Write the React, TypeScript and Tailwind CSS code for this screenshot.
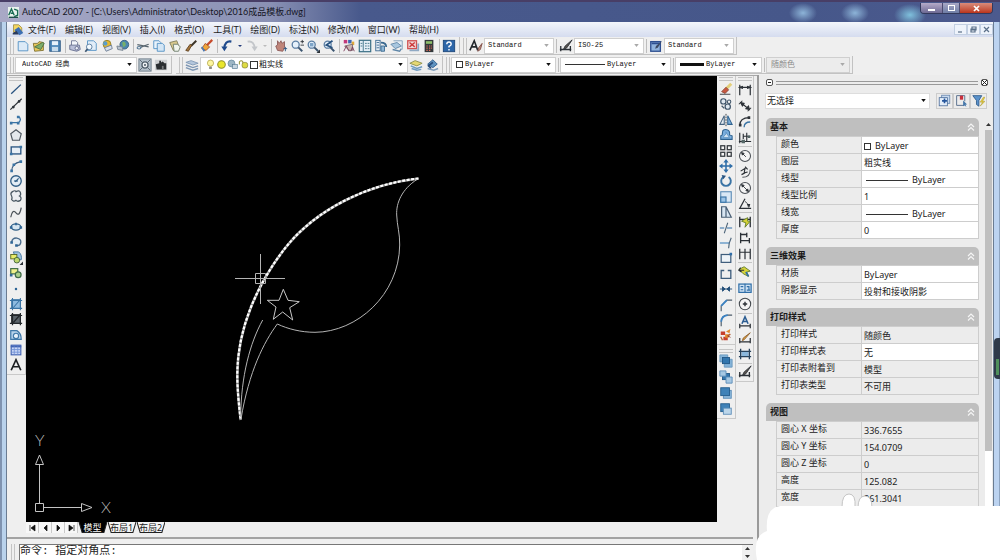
import React from 'react';

type Shape = React.ReactNode;

const NAVY = '#27527f';
const BLUE = '#4f8fc4';
const INK = '#2b3036';

const page = <path d="M2.500 3h8l3 3v7.500h-11z" fill="#dceaf7" stroke={BLUE} />;
const lens = (
  <>
    <circle cx="6.500" cy="6.500" r="4" fill="#e6f1fb" stroke="#5b7ea3" strokeWidth="1.500" />
    <path d="M9.500 9.500l4.500 4.500" stroke="#3c5570" strokeWidth="2.200" />
  </>
);

const ICONS: Record<string, Shape> = {
  new: page,
  open: (
    <>
      <path d="M1.500 5h5l1.500-2 5 1v9l-10 1z" fill="#e9c75a" stroke="#7d7032" />
      <path d="M3 9l9-5 2 1-4 7z" fill="#7fae6b" stroke="#4b6f45" />
    </>
  ),
  save: (
    <>
      <rect x="2" y="2" width="12" height="12" fill="#4c86b8" stroke={NAVY} />
      <rect x="4.500" y="2.500" width="7" height="4.500" fill="#e7f1fa" />
      <rect x="4.500" y="9" width="7" height="5" fill="#c6dbec" />
    </>
  ),
  plot: (
    <>
      <path d="M4 7V2h5l2 2v3" fill="#f3f6fb" stroke="#6b7391" />
      <path d="M2 7h11l1 5-4 2-8-2z" fill="#b9bfd8" stroke="#646c8d" />
      <circle cx="10" cy="10.500" r="2" fill="#e9ecf5" stroke="#646c8d" />
    </>
  ),
  preview: (
    <>
      <path d="M4 2h7l3 3v8H4z" fill="#e1edf8" stroke={BLUE} />
      <circle cx="6" cy="9" r="3.200" fill="#f4fafe" stroke="#52779c" />
      <path d="M4 11.500L1.500 14.500" stroke="#3c5570" strokeWidth="2" />
    </>
  ),
  publish: (
    <>
      <circle cx="8" cy="6" r="4.500" fill="#e7b92e" stroke="#8f7a26" />
      <circle cx="6" cy="5" r="2.500" fill="#5a9ecb" />
      <path d="M5 10l8-3 1 4-7 3z" fill="#d8dfea" stroke="#687a91" />
    </>
  ),
  dwf: (
    <>
      <circle cx="9.500" cy="6.500" r="5" fill="#4b87ae" stroke="#355f7c" />
      <path d="M7 4q3-2 4 1t-3 4z" fill="#76b06a" />
      <path d="M1 8l6 1 1 4-6-1z" fill="#b8c3cf" stroke="#77838f" />
    </>
  ),
  cut: (
    <>
      <path d="M1.500 6.500l13 2.500M14.500 6L5 9.500" stroke="#59666f" strokeWidth="1.500" fill="none" />
      <ellipse cx="3.500" cy="10" rx="2.200" ry="1.400" fill="none" stroke="#567995" strokeWidth="1.200" />
    </>
  ),
  copy: (
    <>
      <path d="M2 2h6l2 2v7H2z" fill="#e9f3fb" stroke={BLUE} />
      <path d="M6 5h6l2 2v7H6z" fill="#d4e6f5" stroke={BLUE} />
    </>
  ),
  paste: (
    <>
      <path d="M2 4l8-2 3 8-7 3z" fill="#d9c98e" stroke="#7b7a58" />
      <path d="M6 6l5 0 3 3-2 5H7z" fill="#f1f5ee" stroke="#6d7c6a" />
    </>
  ),
  match: (
    <>
      <path d="M14 2L8 8" stroke="#3b3327" strokeWidth="2.200" />
      <path d="M9 7l-2-1-5 7 3 1z" fill="#a5763c" stroke="#5d4020" />
    </>
  ),
  block: (
    <>
      <path d="M14 1L7 8" stroke="#c74a2a" strokeWidth="2.500" />
      <path d="M6 5l5 4-4 4-5-2z" fill="#eea63a" stroke="#a4502a" />
      <path d="M2 9l3 5" stroke="#4b79b3" strokeWidth="2" />
    </>
  ),
  undo: (
    <>
      <path d="M13 3C8 2 5 5 5 11" fill="none" stroke="#1f4a8c" strokeWidth="2.500" />
      <path d="M1.500 8.500h7L5 14z" fill="#1f4a8c" />
    </>
  ),
  redo: (
    <>
      <path d="M3 3c5-1 8 2 8 8" fill="none" stroke="#c3c6ca" strokeWidth="2.200" />
      <path d="M7.500 8.500h7L11 14z" fill="#c3c6ca" />
    </>
  ),
  pan: (
    <>
      <path d="M4 13l-2-5 2-1V2l2 3 2-3 1 3 3-2v7l-2 4z" fill="#c08579" stroke="#8b5a58" />
      <path d="M11 11h4M13 9v5" stroke={NAVY} />
    </>
  ),
  zoomRt: (
    <>
      {lens}
      <path d="M12 3h4M14 1v4M12 7h4" stroke={INK} />
    </>
  ),
  zoomWin: (
    <>
      {lens}
      <rect x="4.500" y="4.500" width="4" height="4" fill="#7ea5c8" />
      <path d="M16 12v4h-4z" fill={INK} />
    </>
  ),
  zoomPrev: (
    <>
      {lens}
      <path d="M12 2L5 7l7 3" fill="none" stroke={NAVY} strokeWidth="2" />
    </>
  ),
  props: (
    <>
      <path d="M2 1h4v4H2z" fill="#c2397a" />
      <path d="M7 1h4v4H7z" fill="#3c67b5" />
      <path d="M11 3h3v4h-3z" fill="#e0a93a" />
      <path d="M3 8l9-2v7H8z" fill="#c9b7b0" stroke="#7d6a70" />
      <path d="M2 14l3-6 3 6M10 14l2-5 2 5" stroke="#7b3a59" fill="none" />
    </>
  ),
  center: (
    <>
      <rect x="1.500" y="1.500" width="13" height="13" fill="#e4eef6" stroke="#3d7186" strokeWidth="1.400" />
      <path d="M6 2v12M8 5h2M11 5h2M8 8h2M11 8h2M8 11h2M11 11h2M3 5h2M3 8h2" stroke="#3d7186" />
    </>
  ),
  palettes: (
    <>
      <rect x="2" y="1.500" width="5" height="12" fill="#e6edf5" stroke="#3a6990" />
      <path d="M3 4h3M3 7h3M3 10h3" stroke="#3a6990" />
      <path d="M8 4q6 0 6 5" fill="none" stroke="#3a6990" strokeWidth="2" />
      <path d="M8 8h4v6H8z" fill="#8fb6d6" stroke="#3a6990" />
    </>
  ),
  sheets: (
    <>
      <path d="M4 2h10v10" fill="#e4edf5" stroke="#7f9db8" />
      <path d="M1 6l7-2 5 4-7 3z" fill="#a9c7df" stroke="#5f86a8" />
      <path d="M3 12l8 2 2-3" fill="none" stroke="#5f86a8" strokeWidth="1.500" />
    </>
  ),
  markup: (
    <>
      <rect x="2" y="2" width="10" height="9" fill="#f2d9d9" stroke="#d05252" strokeWidth="1.500" />
      <path d="M4 4l6 5M10 4L4 9" stroke="#cc3838" strokeWidth="1.500" />
      <path d="M4 13h10V5" fill="none" stroke="#8fa9c4" strokeWidth="2" />
    </>
  ),
  calc: (
    <>
      <rect x="3" y="1" width="10" height="14" fill="#33383b" />
      <rect x="4.500" y="2.500" width="7" height="3" fill="#8fbf6b" />
      <path d="M5 8h1.500M8 8h1.500M10.500 8h1M5 10.500h1.500M8 10.500h1.500M5 13h1.500M8 13h1.500M10.500 10.500h1" stroke="#df6d5c" strokeWidth="1.400" />
    </>
  ),
  help: (
    <>
      <rect x="1.500" y="1.500" width="13" height="13" fill="#2d66a8" stroke="#1d4679" />
      <path d="M5.500 6q0-2.500 2.500-2.500T10.500 6q0 1.300-2.500 2.500v1.300M8 11.300v1.700" fill="none" stroke="#fff" strokeWidth="1.600" />
    </>
  ),
  textStyle: (
    <>
      <path d="M1 13L6 2l4 11M3 9h6" fill="none" stroke="#23282d" strokeWidth="1.800" />
      <path d="M15 5l-4 5-1 4 3-2z" fill="#b98e80" stroke="#7d4a44" />
    </>
  ),
  dimStyle: (
    <>
      <path d="M2 8v6M1 12h13M13 8v6" stroke="#2b3036" strokeWidth="1.500" fill="none" />
      <path d="M15 1L7 8l-2 4 4-2z" fill="#59544f" stroke="#2b3036" />
    </>
  ),
  tableStyle: (
    <>
      <rect x="2" y="3" width="11" height="11" fill="#8fb2dc" stroke="#2e4f90" strokeWidth="1.500" />
      <path d="M3 5h9" stroke="#2e4f90" strokeWidth="2" />
      <path d="M15 2l-7 6-1 3 3-1z" fill="#3d4a63" />
    </>
  ),
  gear: (
    <>
      <rect x="1" y="1" width="14" height="14" fill="#b3c0ca" stroke="#6d7c88" />
      <circle cx="8" cy="8" r="3.500" fill="#eef2f4" stroke="#52606c" strokeWidth="1.500" />
      <circle cx="8" cy="8" r="1.200" fill="#52606c" />
      <path d="M2 2l3 3M14 2l-3 3M2 14l3-3M14 14l-3-3" stroke="#52606c" />
    </>
  ),
  house: (
    <>
      <path d="M1 2h14v12H1z" fill="#cfd1d3" />
      <path d="M2 7l4-1V3h2v2l2-1 2 2h2v7H3z" fill="#2b2e31" />
      <path d="M9 9h2v4H9z" fill="#77797b" />
    </>
  ),
  layers: (
    <>
      <path d="M1 5l6-2 8 3-6 2z" fill="#b3c6dc" stroke="#7e97b4" />
      <path d="M1 8l8 3 6-2M1 11l8 3 6-2" stroke="#7e97b4" strokeWidth="1.600" fill="none" />
    </>
  ),
  layerSet: (
    <>
      <path d="M1 6l6-3 8 3-6 3z" fill="#e5d873" stroke="#8d8f4c" />
      <path d="M2 9l7 3 6-2M3 12l6 2 5-1" stroke="#6e9bc1" strokeWidth="1.600" fill="none" />
    </>
  ),
  layerPrev: (
    <>
      <path d="M3 7l6-5 5 5-5 4z" fill="#5f93c0" stroke="#2f5d8b" />
      <path d="M9 5L4 9l3 3" fill="none" stroke="#274a78" strokeWidth="2" />
      <path d="M3 12l7 2 5-2" stroke="#7f9dba" strokeWidth="1.600" fill="none" />
    </>
  ),
  bulb: (
    <>
      <circle cx="8" cy="6" r="4.500" fill="#fdf6a0" stroke="#a99a3c" />
      <path d="M6 11h4v3.500H6z" fill="#8b8b83" />
    </>
  ),
  sun: <circle cx="8" cy="8" r="5.500" fill="#e9e62c" stroke="#8f8f2e" strokeWidth="1.500" />,
  vpFreeze: (
    <>
      <circle cx="6.500" cy="6.500" r="5" fill="#9db6c4" stroke="#5d8197" />
      <rect x="8" y="8" width="7" height="6" fill="#c8d6df" stroke="#5d8197" />
    </>
  ),
  unlock: (
    <>
      <path d="M2 8V4q3-3 5 0v2" fill="none" stroke="#96953c" strokeWidth="1.500" />
      <rect x="6" y="5" width="8" height="8" rx="3" fill="#dedb42" stroke="#7f7e2c" />
    </>
  ),
  line: <path d="M2.500 13.500L13.500 3" stroke={NAVY} strokeWidth="1.500" />,
  xline: (
    <>
      <path d="M1.500 14.500L14.500 2" stroke={INK} strokeWidth="1.300" />
      <circle cx="5" cy="11.500" r="1.500" fill={INK} />
      <circle cx="11.500" cy="5" r="1.500" fill={INK} />
    </>
  ),
  pline: (
    <>
      <path d="M2 11h9q4-3.500 0-7" fill="none" stroke="#3a74a5" strokeWidth="1.500" />
      <path d="M1 10h3v3H1zM9 3h3v3H9zM9 10h3v3H9z" fill="#3a74a5" />
    </>
  ),
  polygon: <path d="M8 2l6 4.500L12 14H4L2 6.500z" fill="#e4e8ec" stroke="#4d565f" strokeWidth="1.300" />,
  rect: (
    <>
      <rect x="2.500" y="4.500" width="11" height="8" fill="#e7eef5" stroke={NAVY} strokeWidth="1.500" />
      <path d="M1 11h3v3H1zM12 3h3v3h-3z" fill="#3a74a5" />
    </>
  ),
  arc: (
    <>
      <path d="M3 14Q3 5 13.500 3" fill="none" stroke="#3a5d80" strokeWidth="1.400" />
      <path d="M1.500 12h3v3h-3zM4 5h3v3H4zM12 1.500h3v3h-3z" fill="#3a74a5" />
    </>
  ),
  circle: (
    <>
      <circle cx="8" cy="8" r="6" fill="#e3edf5" stroke="#2f5d85" strokeWidth="1.500" />
      <path d="M7 9l4-4M6 8h4" stroke="#2f5d85" strokeWidth="1.500" />
    </>
  ),
  cloud: (
    <path d="M3 8q-2-3 1-5 3-2 4 0 4-2 5 1 1 3-1 4 3 2 1 5-3 2-5 0-3 2-5-1 1-2 0-4z" fill="#eceef1" stroke="#485661" strokeWidth="1.400" />
  ),
  spline: <path d="M2 14q2-10 6-5t6-6" fill="none" stroke="#4b5258" strokeWidth="1.400" />,
  ellipse: (
    <>
      <ellipse cx="8" cy="8" rx="5.500" ry="3.500" fill="#d6e5f0" stroke="#2f5d85" strokeWidth="1.400" />
      <path d="M1 7h3v3H1zM12 7h3v3h-3zM7 3h2v3H7z" fill="#2f6697" />
    </>
  ),
  ellArc: (
    <>
      <path d="M3 8q1-5 6-4.500 5 1 4.500 5T9 12" fill="#e4edf4" stroke="#496a8a" strokeWidth="1.500" />
      <path d="M1.500 7h3v3h-3zM7 10.500h3v3H7z" fill="#2f6697" />
    </>
  ),
  insert: (
    <>
      <path d="M5 1h6q4 3 3 9H8z" fill="#9fc3e2" stroke="#3c6f9c" />
      <rect x="2" y="4" width="7" height="5" fill="#e8ec6a" stroke="#55631f" />
      <circle cx="9" cy="10.500" r="3.200" fill="#bdd86c" stroke="#3e5f38" />
      <path d="M16 12v4h-4z" fill={INK} />
    </>
  ),
  makeBlock: (
    <>
      <rect x="2" y="3" width="8" height="6" fill="#eef08a" stroke="#44704a" strokeWidth="1.400" />
      <circle cx="10.500" cy="10" r="3.300" fill="#a9d08c" stroke="#3e6a48" strokeWidth="1.400" />
      <path d="M1 9h3v3H1z" fill="#2f6697" />
    </>
  ),
  point: <circle cx="8" cy="8" r="1.400" fill="#2f6697" />,
  hatch: (
    <>
      <rect x="3" y="3" width="10" height="10" fill="#8ebbe0" stroke="#3a74a5" />
      <path d="M1 4h14M1 13h14M4 1v14M13 1v14M5 12l7-8" stroke="#3a74a5" strokeWidth="1.200" />
    </>
  ),
  gradient: (
    <>
      <rect x="3" y="3" width="10" height="10" fill="#5c646b" stroke="#1f2326" />
      <path d="M1 4h14M1 13h14M4 1v14M13 1v14M5 12l7-8" stroke="#23272b" strokeWidth="1.400" />
    </>
  ),
  region: (
    <>
      <path d="M2 3h7q5 3 5 10H2z" fill="#b5d2ea" stroke="#3f78a8" strokeWidth="1.400" />
      <circle cx="8" cy="9" r="3" fill="#e8f2fa" stroke="#3f78a8" strokeWidth="1.300" />
    </>
  ),
  table: (
    <>
      <rect x="2.500" y="2.500" width="11" height="11" fill="#c9d6f6" stroke="#4264b4" strokeWidth="1.300" />
      <path d="M2 4h12" stroke="#4264b4" strokeWidth="2" />
      <path d="M3 7.500h10M3 10.500h10M6 4v9M10 4v9" stroke="#7392d6" />
    </>
  ),
  mtext: <path d="M2.500 14L8 2l5.500 12M4.500 10h7" fill="none" stroke="#1d2023" strokeWidth="1.900" />,
  erase: (
    <>
      <path d="M14 2L8 8" stroke="#e3cf7a" strokeWidth="3.500" />
      <path d="M8 6l3 3-4 4-4-2z" fill="#c9573f" stroke="#8b4b3e" />
      <path d="M1 14h12" stroke={INK} />
    </>
  ),
  copyObj: (
    <>
      <circle cx="5" cy="5" r="3" fill="#dfe8f0" stroke="#3f5469" strokeWidth="1.400" />
      <circle cx="11.500" cy="5.500" r="2" fill="none" stroke="#3f5469" strokeWidth="1.200" />
      <circle cx="10" cy="11" r="3" fill="#dfe8f0" stroke="#3f5469" strokeWidth="1.400" />
      <path d="M3 10l3 3" stroke="#3f5469" strokeWidth="1.400" />
    </>
  ),
  mirror: (
    <>
      <path d="M6 3v10H1z" fill="#e6edf3" stroke="#44617e" strokeWidth="1.200" />
      <path d="M10 3v10h5z" fill="#7fb0da" stroke="#2e628f" strokeWidth="1.200" />
      <path d="M8 1v14" stroke={INK} strokeDasharray="2 1" />
    </>
  ),
  offset: (
    <>
      <path d="M2 13V9q2 0 2-4t5-3q4 1 3 6l3 1v4z" fill="#7aaede" stroke="#2e628f" strokeWidth="1.200" />
      <path d="M5 11q0-2 2-3t1-3 2 3l2 3z" fill="#d3e4f3" stroke="#5d92c0" />
    </>
  ),
  array: (
    <>
      <rect x="2" y="2" width="4.500" height="4.500" fill="#f5f5f5" stroke="#3a3f44" strokeWidth="1.500" />
      <rect x="9.500" y="2" width="4.500" height="4.500" fill="#f5f5f5" stroke="#3a3f44" strokeWidth="1.500" />
      <rect x="2" y="9.500" width="4.500" height="4.500" fill="#f5f5f5" stroke="#3a3f44" strokeWidth="1.500" />
      <rect x="9.500" y="9.500" width="4.500" height="4.500" fill="#f5f5f5" stroke="#3a3f44" strokeWidth="1.500" />
    </>
  ),
  move: (
    <>
      <path d="M8 3v10M3 8h10" stroke="#2f6ea8" strokeWidth="1.800" />
      <path d="M8 0l3 4H5zM8 16l3-4H5zM0 8l4-3v6zM16 8l-4-3v6z" fill="#2f6ea8" />
    </>
  ),
  rotate: (
    <>
      <path d="M5 3.500a5.500 5.500 0 1 0 6 0" fill="none" stroke="#3a74a5" strokeWidth="2.200" />
      <path d="M3 1l5 1-3 4z" fill="#27527f" />
    </>
  ),
  scale: (
    <>
      <rect x="2" y="2" width="12" height="12" fill="#d9e8f5" stroke="#5588b3" strokeWidth="1.200" />
      <rect x="2" y="8" width="6" height="6" fill="#9cc4e6" stroke="#3a74a5" strokeWidth="1.300" />
    </>
  ),
  stretch: <path d="M3 2h5l6 12H3zM8 2v12" fill="#d9e6f2" stroke="#4a5f74" strokeWidth="1.400" />,
  trim: (
    <>
      <path d="M1 8h5M9 8h6" stroke="#2f6ea8" strokeWidth="1.300" />
      <path d="M10 2L6 14" stroke="#4d6479" strokeWidth="1.200" />
    </>
  ),
  extend: (
    <>
      <path d="M1 8h11" stroke="#5b93c4" strokeWidth="1.500" />
      <path d="M14 2q-3 6-3 12" stroke="#4d6479" strokeWidth="1.300" fill="none" />
    </>
  ),
  breakPt: (
    <>
      <rect x="2.500" y="4" width="11" height="9" fill="#eef3f8" stroke="#3e5d7c" strokeWidth="1.400" />
      <path d="M12 2h3v3h-3z" fill="#2f6ea8" />
    </>
  ),
  breakObj: <path d="M6 4H2.500v9h11V4H10" fill="none" stroke="#3e5d7c" strokeWidth="1.500" />,
  join: <path d="M1 8h14M4 5.500L7 8l-3 2.500zM12 5.500L9 8l3 2.500z" fill="#244f79" stroke="#244f79" strokeWidth="1.100" />,
  chamfer: (
    <>
      <path d="M2.500 15V9L9 2.500h6" fill="none" stroke="#4b5a68" strokeWidth="1.300" />
      <path d="M2.500 9L9 2.500" stroke="#3b83c4" strokeWidth="2" />
    </>
  ),
  fillet: (
    <>
      <path d="M2.500 15V10Q3 3 10 2.500h5" fill="none" stroke="#4b5a68" strokeWidth="1.300" />
      <path d="M2.500 10Q3 3 10 2.500" fill="none" stroke="#3b83c4" strokeWidth="2" />
    </>
  ),
  explode: (
    <>
      <path d="M2 4h5v4H2zM5 10h5v4H5z" fill="#c6402c" />
      <path d="M8 4l5-3-1 5zM7 7h4v4H7z" fill="#e2892d" />
      <path d="M10 8l4 3-4-1z" fill="#8b3428" />
      <path d="M2 10l2 4M13 7l-3 2" stroke="#b35a2f" strokeWidth="1.500" />
    </>
  ),
  front: (
    <>
      <path d="M6 6h9v9H6zM1 1h9v8H1z" fill="#84b3d8" stroke="#6897be" />
      <rect x="4" y="4" width="8" height="7" fill="#3276ae" stroke="#1f5584" />
    </>
  ),
  back: (
    <>
      <rect x="4" y="4" width="8" height="7" fill="#3276ae" stroke="#1f5584" />
      <path d="M8 8h7v7H8zM1 1h7v6H1z" fill="#a6c8e3" stroke="#5a8cb7" />
    </>
  ),
  above: (
    <>
      <rect x="5" y="5" width="9" height="9" fill="#8db9dc" stroke="#5a8cb7" />
      <rect x="2" y="2" width="10" height="9" fill="#3f82b8" stroke="#215a8a" />
    </>
  ),
  under: (
    <>
      <rect x="2" y="2" width="10" height="9" fill="#3f82b8" stroke="#215a8a" />
      <rect x="5" y="7" width="9" height="7" fill="#bcd6ea" stroke="#5a8cb7" />
    </>
  ),
  dimLin: <path d="M2 2v12M14 2v12M2 5h12M2 5l3-1v2zM14 5l-3-1v2z" fill={INK} stroke={INK} strokeWidth="1.400" />,
  dimAli: <path d="M1 6l4-4M11 14l4-4M3 4l10 8M3 4l4 1-2 3zM13 12l-1-4-3 3z" fill={INK} stroke={INK} strokeWidth="1.200" />,
  dimArc: (
    <>
      <path d="M2 12Q2 3 13 3" fill="none" stroke={INK} strokeWidth="1.500" />
      <path d="M7 14q0-6 7-6" fill="none" stroke="#3a74a5" strokeWidth="1.500" />
      <path d="M1 10h3v3H1zM11 1.500h3v3h-3z" fill={INK} />
    </>
  ),
  dimOrd: (
    <>
      <path d="M2 2v12M1 12h14M6 3v6M10 2v10M6 6h8" stroke={INK} strokeWidth="1.300" />
      <path d="M4 10h4v4H4zM11 5h3v3h-3z" fill="#566" />
    </>
  ),
  dimRad: (
    <>
      <circle cx="8" cy="8" r="6.300" fill="#f4f4f4" stroke="#4c5157" strokeWidth="1.200" />
      <path d="M9 9L5 5M4 4l3 1-2 2z" fill={INK} stroke={INK} />
    </>
  ),
  dimJog: (
    <>
      <path d="M5 14q9 0 9-9" fill="none" stroke="#4c5157" strokeWidth="1.200" />
      <path d="M3 7l5-3-1 5 4-1M8 2l3 3M4 11l4-2" fill="none" stroke={INK} strokeWidth="1.300" />
    </>
  ),
  dimDia: (
    <>
      <circle cx="8" cy="8" r="6.300" fill="#f4f4f4" stroke="#4c5157" strokeWidth="1.200" />
      <path d="M5 5l6 6M4 4l3 1-2 2zM12 12l-1-3-2 2z" fill={INK} stroke={INK} />
    </>
  ),
  dimAng: (
    <>
      <path d="M8 2L2 13h13" fill="none" stroke={INK} strokeWidth="1.400" />
      <path d="M8 5q4 2 4 7" fill="none" stroke={INK} />
      <path d="M10 8l4 0-1 4z" fill={INK} />
    </>
  ),
  dimQuick: (
    <>
      <path d="M2 2v12M14 2v12M2 5h12" stroke={INK} strokeWidth="1.500" />
      <path d="M4 7l7-4v4l3 0-6 7 1-5z" fill="#d7d335" stroke="#5f7a2a" />
    </>
  ),
  dimBase: <path d="M3 2v12M13 8v6M10 2v5M3 4h7M3 11h10" fill="none" stroke={INK} strokeWidth="1.500" />,
  dimCont: <path d="M2 2v12M8 2v12M14 2v12M2 6h12" fill="none" stroke={INK} strokeWidth="1.400" />,
  leader: (
    <>
      <path d="M1 5l6-3 7 5-4 1 2 5-6-3z" fill="#d6d33a" stroke="#5f7a2a" />
      <path d="M1 6h6M3 3l-2 3 3 2" stroke={INK} fill="none" strokeWidth="1.300" />
      <path d="M9 8l3 5" stroke="#2f6ea8" strokeWidth="2" />
    </>
  ),
  tol: (
    <>
      <rect x="1" y="3.500" width="14" height="9.500" fill="#cfe2f3" stroke="#2f6ea8" strokeWidth="1.400" />
      <path d="M8 3v10M3 6.500h3M3 10h3M10 6.500h2.500v4M10 10.500h4" stroke="#2f6ea8" fill="none" strokeWidth="1.300" />
    </>
  ),
  centerMark: (
    <>
      <circle cx="8" cy="8" r="6.500" fill="#f4f4f4" stroke="#43484d" strokeWidth="1.200" />
      <path d="M8 5.500v5M5.500 8h5" stroke={INK} strokeWidth="1.600" />
    </>
  ),
  dimEdit: (
    <>
      <path d="M4.500 10L8 2l3.500 8M6 7.500h4" fill="none" stroke="#2c5d92" strokeWidth="1.800" />
      <path d="M2 10v5M14 10v5M2 12.500h12" stroke={INK} strokeWidth="1.400" />
    </>
  ),
  dimTedit: (
    <>
      <path d="M14 2L7 10l-2 1 1-3z" fill="#e2a542" stroke="#8b5d2a" />
      <path d="M2 8v6M14 8v6M2 12.500h12" stroke={INK} strokeWidth="1.400" />
    </>
  ),
  dimUpd: (
    <>
      <rect x="4" y="5" width="8" height="6" fill="#8ab7dc" />
      <path d="M3 2v12M13 2v12M1 11h14M1 5h14" stroke="#27425c" strokeWidth="1.500" />
    </>
  ),
};

function Icon({ name, className = 'size-[14px]' }: { name: string; className?: string }) {
  return (
    <svg viewBox="0 0 16 16" className={`${className} shrink-0`} fill="none" aria-hidden="true">
      {ICONS[name]}
    </svg>
  );
}

function ToolButton({ name }: { name: string }) {
  return (
    <button type="button" aria-label={name} className="flex w-4 h-[15px] shrink-0 items-center justify-center">
      <Icon name={name} />
    </button>
  );
}

function DropTick({ muted = false }: { muted?: boolean }) {
  return (
    <button type="button" aria-label="history" className="flex w-[9px] items-center justify-center">
      <svg viewBox="0 0 4 2" className="w-1 h-[2px]"><path d="M0 0h4L2 2z" fill={muted ? '#bbb' : '#223a7a'} /></svg>
    </button>
  );
}

function Sep() {
  return <div className="w-px h-[14px] ml-[2px] mr-px shrink-0 bg-[#bdbdbd]" />;
}

function Grip() {
  return <div className="w-[4px] h-[16px] mr-px shrink-0 border-x border-[#c4c4c4]" />;
}

interface ComboProps {
  label: string;
  value: string;
  width: string;
  text?: string;
  disabled?: boolean;
  muted?: boolean;
  children?: React.ReactNode;
}

function Combo({ label, value, width, text = 'pl-[3px] text-[7px]', disabled, muted, children }: ComboProps) {
  return (
    <div className={`relative flex items-center h-4 shrink-0 border border-[#cfcfcf] ${disabled ? 'bg-[#ececec]' : 'bg-white'} ${width}`}>
      <select
        aria-label={label}
        disabled={disabled}
        className={`appearance-none w-full h-full pr-3 bg-transparent outline-none ${disabled ? 'text-[#8a8a8a]' : 'text-[#111]'} ${text}`}
      >
        <option>{value}</option>
      </select>
      <div className="absolute left-1 inset-y-0 flex items-center pointer-events-none">{children}</div>
      <svg viewBox="0 0 6 4" className="absolute right-1 w-[5px] h-[3px] pointer-events-none">
        <path d="M0 0h6L3 4z" fill={muted || disabled ? '#a9a9a9' : '#111'} />
      </svg>
    </div>
  );
}

const STANDARD = [
  ['new', 'open', 'save'],
  ['plot', 'preview', 'publish', 'dwf'],
  ['cut', 'copy', 'paste', 'match', 'block'],
];
const DRAW = [
  'line', 'xline', 'pline', 'polygon', 'rect', 'arc', 'circle', 'cloud', 'spline', 'ellipse',
  'ellArc', 'insert', 'makeBlock', 'point', 'hatch', 'gradient', 'region', 'table', 'mtext',
];
const MODIFY = [
  'erase', 'copyObj', 'mirror', 'offset', 'array', 'move', 'rotate', 'scale', 'stretch', 'trim',
  'extend', 'breakPt', 'breakObj', 'join', 'chamfer', 'fillet', 'explode',
];
const ORDER = ['front', 'back', 'above', 'under'];
const DIMS = [
  ['dimLin', 'dimAli', 'dimArc', 'dimOrd'],
  ['dimRad', 'dimJog', 'dimDia', 'dimAng'],
  ['dimQuick', 'dimBase', 'dimCont'],
  ['leader', 'tol', 'centerMark'],
  ['dimEdit', 'dimTedit', 'dimUpd'],
  ['dimStyle'],
];

const MENUS = [
  '文件(F)', '编辑(E)', '视图(V)', '插入(I)', '格式(O)', '工具(T)',
  '绘图(D)', '标注(N)', '修改(M)', '窗口(W)', '帮助(H)',
];

type Row = { label: string; value: string; mark?: 'swatch' | 'line'; readOnly?: boolean };

const SECTIONS: { title: string; rows: Row[] }[] = [
  {
    title: '基本',
    rows: [
      { label: '颜色', value: 'ByLayer', mark: 'swatch' },
      { label: '图层', value: '粗实线' },
      { label: '线型', value: 'ByLayer', mark: 'line' },
      { label: '线型比例', value: '1' },
      { label: '线宽', value: 'ByLayer', mark: 'line' },
      { label: '厚度', value: '0' },
    ],
  },
  {
    title: '三维效果',
    rows: [
      { label: '材质', value: 'ByLayer' },
      { label: '阴影显示', value: '投射和接收阴影' },
    ],
  },
  {
    title: '打印样式',
    rows: [
      { label: '打印样式', value: '随颜色', readOnly: true },
      { label: '打印样式表', value: '无' },
      { label: '打印表附着到', value: '模型', readOnly: true },
      { label: '打印表类型', value: '不可用', readOnly: true },
    ],
  },
  {
    title: '视图',
    rows: [
      { label: '圆心 X 坐标', value: '336.7655', readOnly: true },
      { label: '圆心 Y 坐标', value: '154.0709', readOnly: true },
      { label: '圆心 Z 坐标', value: '0', readOnly: true },
      { label: '高度', value: '125.082', readOnly: true },
      { label: '宽度', value: '261.3041', readOnly: true },
    ],
  },
];

function TitleBar() {
  return (
    <header className="relative flex items-center h-[22px] shrink-0 pl-2 border-t-2 border-[#483e66] bg-[linear-gradient(to_right,#a9a9c6,#9a9fbf_12%,#8a91b4_27%,#48598c_36%,#46578a_80%,#4c5a8e)]">
      <div className="absolute inset-0 bg-[radial-gradient(ellipse_14px_10px_at_803px_11px,#8db4d8,transparent),radial-gradient(ellipse_14px_10px_at_855px_11px,#8db4d8,transparent),radial-gradient(ellipse_16px_11px_at_910px_13px,#7fc0dc,transparent)]" />
      <svg viewBox="0 0 16 16" className="relative size-[11px] shrink-0">
        <rect width="16" height="16" fill="#e9f3ee" />
        <path d="M1 12L5 3l4 9M4 9h4M9 3l5 2v7l-5 2" fill="none" stroke="#176a52" strokeWidth="2" />
        <path d="M1 15h14" stroke="#1f4f4a" strokeWidth="2" />
      </svg>
      <h1 className="relative pl-[3px] text-[9px] text-[#14151f] whitespace-nowrap font-[Lato,Noto_Sans_CJK_SC,sans-serif]">
        {'AutoCAD 2007 - [C:\\Users\\Administrator\\Desktop\\2016成品模板.dwg]'}
      </h1>
      <div className="relative flex ml-auto mr-[7px] self-start mt-px h-[11px] rounded-b-sm overflow-hidden border border-t-0 border-[#33395c]">
        <button type="button" aria-label="最小化" className="flex w-[22px] items-center justify-center bg-linear-to-b from-[#b6abc9] to-[#6e6a94] border-r border-[#4c4a70]">
          <span className="w-[7px] h-[2px] mt-1 bg-white" />
        </button>
        <button type="button" aria-label="还原" className="flex w-[17px] items-center justify-center bg-linear-to-b from-[#a9a8c6] to-[#6f7ea6] border-r border-[#4c4a70]">
          <span className="w-[7px] h-[6px] border border-white" />
        </button>
        <button type="button" aria-label="关闭" className="flex w-[32px] items-center justify-center bg-linear-to-b from-[#d98b7b] to-[#bb3319]">
          <svg viewBox="0 0 7 7" className="size-[7px]"><path d="M1 1l5 5M6 1L1 6" stroke="#fff" strokeWidth="1.700" /></svg>
        </button>
      </div>
    </header>
  );
}

function MenuBar() {
  return (
    <nav className="flex items-center h-[15px] shrink-0 pl-[5px] bg-linear-to-b from-[#f3f6fb] to-[#d5dcef]">
      <svg viewBox="0 0 16 16" className="size-[12px] shrink-0">
        <path d="M2 1h7l4 4v6H2z" fill="#f4d662" stroke="#98843a" />
        <path d="M3 8l6-4 6 8-5 3z" fill="#3d6fb3" />
        <path d="M1 12l5-3 3 5H1z" fill="#2a3a5c" />
      </svg>
      <div className="flex items-center ml-1 gap-[9px] font-[Lato,Noto_Sans_CJK_SC,sans-serif]">
        {MENUS.map((m) => (
          <button key={m} type="button" className="text-[9px] leading-[15px] whitespace-nowrap text-[#1c1c1c]">{m}</button>
        ))}
      </div>
      <div className="flex ml-auto h-[11px] text-[#5b7089]">
        {['M2 7h4', 'M3 2h4v3H3zM2 4h4v3H2z', 'M2 2l5 5M7 2L2 7'].map((d) => (
          <button key={d} type="button" aria-label="window" className="flex w-[13px] items-center justify-center border border-[#c2cfe2] bg-[#eef3fb]">
            <svg viewBox="0 0 9 9" className="size-[9px]"><path d={d} fill="none" stroke="currentColor" strokeWidth="1.200" /></svg>
          </button>
        ))}
      </div>
    </nav>
  );
}

function Bar({ children }: { children: React.ReactNode }) {
  return <div className="flex items-center h-[18px] pl-[3px] pr-[2px] border-r border-b border-[#c2c2c2]">{children}</div>;
}

function Toolbars() {
  return (
    <div className="shrink-0 font-[Liberation_Mono,Noto_Sans_CJK_SC,monospace]">
      <div className="flex h-[19px]">
        <Bar>
          <Grip />
          {STANDARD.map((group) => (
            <React.Fragment key={group[0]}>
              {group.map((n) => <ToolButton key={n} name={n} />)}
              <Sep />
            </React.Fragment>
          ))}
          <ToolButton name="undo" />
          <DropTick />
          <ToolButton name="redo" />
          <DropTick muted />
          <Sep />
          {['pan', 'zoomRt', 'zoomWin', 'zoomPrev'].map((n) => <ToolButton key={n} name={n} />)}
          <Sep />
          {['props', 'center', 'palettes', 'sheets', 'markup', 'calc'].map((n) => <ToolButton key={n} name={n} />)}
          <Sep />
          <ToolButton name="help" />
        </Bar>
        <Bar>
          <Grip />
          <ToolButton name="textStyle" />
          <Combo label="文字样式" value="Standard" width="w-[70px]" muted />
          <Sep />
          <ToolButton name="dimStyle" />
          <Combo label="标注样式" value="ISO-25" width="w-[70px]" muted />
          <Sep />
          <ToolButton name="tableStyle" />
          <Combo label="表格样式" value="Standard" width="w-[70px]" muted />
        </Bar>
      </div>
      <div className="flex h-[19px]">
        <Bar>
          <Grip />
          <Combo label="工作空间" value="AutoCAD 经典" width="w-[122px]" text="pl-[6px] text-[7px]" />
          <ToolButton name="gear" />
          <ToolButton name="house" />
        </Bar>
        <div className="w-1" />
        <Bar>
          <Grip />
          <ToolButton name="layers" />
          <Combo label="图层" value="粗实线" width="w-[208px]" text="pl-[58px] text-[8px]">
            {['bulb', 'sun', 'vpFreeze', 'unlock'].map((n) => <Icon key={n} name={n} className="size-[11px]" />)}
            <span className="size-[8px] ml-px border border-[#333]" />
          </Combo>
          <ToolButton name="layerSet" />
          <ToolButton name="layerPrev" />
        </Bar>
        <Bar>
          <Grip />
          <Combo label="颜色" value="ByLayer" width="w-[105px]" text="pl-[13px] text-[7px]">
            <span className="size-[7px] border border-[#333]" />
          </Combo>
          <Sep />
          <Combo label="线型" value="ByLayer" width="w-[111px]" text="pl-[46px] text-[7px]">
            <span className="w-[40px] h-px bg-[#333]" />
          </Combo>
          <Sep />
          <Combo label="线宽" value="ByLayer" width="w-[87px]" text="pl-[30px] text-[7px]">
            <span className="w-[24px] h-[3px] bg-[#111]" />
          </Combo>
          <Sep />
          <Combo label="打印样式" value="随颜色" width="w-[84px]" text="pl-1 text-[8px]" disabled />
        </Bar>
      </div>
    </div>
  );
}

function HGrip() {
  return <div className="w-[14px] h-[4px] shrink-0 mx-auto border-y border-[#c4c4c4]" />;
}

function Drawing() {
  const rib = 'M418.500 178.500C368 184 316 209 285 248.300C258 283 237.300 328 237.300 375C237.300 390 239 406 240.700 420';
  return (
    <svg viewBox="26 76 690 446" preserveAspectRatio="xMinYMax meet" className="w-full h-full" fill="none" stroke="#b4b4b4" strokeWidth="1">
      <path d={rib} stroke="#8f8f8f" strokeWidth="2.600" />
      <path d={rib} stroke="#fff" strokeWidth="2.200" strokeDasharray="3 1.500" />
      <path d="M417 179.500C402 189 396 203 396.700 215C397 225 400 234 399.700 245C399 295 357 332 315 332.300C301 332.300 288 329 277.300 324C264 342 249 371 241 419" />
      <path d="M262.700 320C250 343 241 376 240.700 417" />
      <path d="M283.300 289.300L288 300.300L299.300 301.700L289.700 307.700L292.700 320L282.700 312L273.300 319.300L276 307L267.300 300.300L279 300.300Z" stroke="#c8c8c8" />
      <path d="M235 278.500H285M260.500 254V304M255.500 273.500H265.500V283.500H255.500Z" />
      <path d="M35.500 503.500H43.500V511.500H35.500ZM39.500 503V465M35.500 464.500L39.500 455L43.500 464.500ZM44 507.500H81M81.500 503.500L92 507.500L81.500 511.500Z" stroke="#c4c4c4" />
      <g fill="#b8b8b8" stroke="none" className="font-[Lato,sans-serif] font-light text-[16px]">
        <text x="35" y="446">Y</text>
        <text x="101" y="513">X</text>
      </g>
    </svg>
  );
}

function LayoutTabs() {
  const nav = ['M2 1v6M7 1L3 4l4 3z', 'M6 1L3 4l3 3z', 'M3 1l3 3-3 3z', 'M7 1v6M2 1l4 3-4 3z'];
  return (
    <div className="flex h-[11px] shrink-0 text-[9px]">
      {nav.map((d) => (
        <button key={d} type="button" aria-label="layout" className="flex w-[13px] items-center justify-center border-r border-[#c9c9c9] bg-[#f7f7f7]">
          <svg viewBox="0 0 9 8" className="w-[9px] h-[8px]"><path d={d} fill="#111" stroke="#111" strokeWidth=".7" /></svg>
        </button>
      ))}
      {['模型', '布局1', '布局2'].map((t, i) => (
        <button key={t} type="button" className={`relative w-[29px] leading-[11px] whitespace-nowrap ${i === 0 ? 'text-white' : 'text-[#222]'}`}>
          <svg viewBox="0 0 28 11" preserveAspectRatio="none" className="absolute inset-0 w-full h-full">
            <path d="M1 0L4 10.500H25L28 0" fill={i === 0 ? '#000' : '#f4f4f4'} stroke="#222" />
          </svg>
          <span className="relative">{t}</span>
        </button>
      ))}
    </div>
  );
}

function Workspace() {
  return (
    <div className="flex flex-1 min-h-0 border-t border-[#a9a9a9]">
      <div className="w-[19px] shrink-0">
        <div className="flex flex-col items-center justify-between h-[299px] py-px border-b border-r border-[#c9c9c9]">
          <HGrip />
          {DRAW.map((n) => <ToolButton key={n} name={n} />)}
        </div>
      </div>
      <div className="flex flex-1 min-w-0 flex-col pb-1">
        <main className="flex-1 min-h-0 overflow-hidden bg-black">
          <Drawing />
        </main>
        <LayoutTabs />
      </div>
      <div className="w-[19px] shrink-0">
        <div className="flex flex-col items-center justify-between h-[269px] py-px border-b border-r border-[#c9c9c9]">
          <HGrip />
          {MODIFY.map((n) => <ToolButton key={n} name={n} />)}
        </div>
        <div className="flex flex-col items-center justify-between h-[74px] pt-[4px] pb-[2px] border-b border-r border-[#c9c9c9]">
          <HGrip />
          {ORDER.map((n) => <ToolButton key={n} name={n} />)}
        </div>
      </div>
      <div className="w-[18px] shrink-0 mr-[3px]">
        <div className="flex flex-col items-center justify-between h-[306px] py-px border-b border-r border-[#c9c9c9]">
          <HGrip />
          {DIMS.map((group, i) => (
            <React.Fragment key={group[0]}>
              {i > 0 && <div className="w-[14px] h-px bg-[#c4c4c4]" />}
              {group.map((n) => <ToolButton key={n} name={n} />)}
            </React.Fragment>
          ))}
        </div>
      </div>
    </div>
  );
}

function CommandLine() {
  return (
    <div className="flex h-[23px] shrink-0 pt-[5px] mr-1 pl-1 border-t-2 border-[#a3a3a3]">
      <div className="w-[4px] mr-1 border-x border-[#c4c4c4]" />
      <div className="flex flex-1 border-t border-l border-[#777] bg-white">
        <input
          aria-label="命令"
          readOnly
          value="命令: 指定对角点:"
          className="flex-1 min-w-0 h-[13px] text-[11px] text-[#222] outline-none font-[Liberation_Mono,Noto_Sans_CJK_SC,monospace]"
        />
        <div className="flex w-[11px] flex-col items-center justify-around bg-[#f0f0f0]">
          <svg viewBox="0 0 5 3" className="w-[5px] h-[3px]"><path d="M0 3h5L2.500 0z" fill="#333" /></svg>
          <svg viewBox="0 0 5 3" className="w-[5px] h-[3px]"><path d="M0 0h5L2.500 3z" fill="#333" /></svg>
        </div>
      </div>
    </div>
  );
}

function Section({ title, rows }: { title: string; rows: Row[] }) {
  return (
    <section className="mb-2">
      <h2 className="flex items-center justify-between h-[18px] px-1 rounded-t-[5px] bg-[#bfbfbf] text-[9px] font-bold text-[#1a1a1a]">
        {title}
        <button type="button" aria-label={`折叠${title}`}>
          <svg viewBox="0 0 8 8" className="size-[8px]"><path d="M1 4l3-3 3 3M1 7.500l3-3 3 3" fill="none" stroke="#f5f5f5" strokeWidth="1.200" /></svg>
        </button>
      </h2>
      <div className="pl-[10px]">
        <table className="w-full table-fixed border-collapse text-[9px] leading-[12px] text-[#222]">
          <tbody>
            {rows.map((r) => (
              <tr key={r.label} className="h-[17px]">
                <th scope="row" className="w-[85px] px-1 pb-[2px] text-left font-normal border border-[#cdcdcd] bg-[#ececec]">{r.label}</th>
                <td className={`px-[2px] pt-[2px] border border-[#cdcdcd] ${r.readOnly ? 'bg-[#ececec]' : 'bg-white'}`}>
                  <div className="flex items-center">
                    {r.mark === 'swatch' && <span className="size-[7px] mr-1 border border-[#333]" />}
                    {r.mark === 'line' && <span className="w-[42px] h-px ml-[2px] mr-1 bg-[#333]" />}
                    {r.value}
                  </div>
                </td>
              </tr>
            ))}
          </tbody>
        </table>
      </div>
    </section>
  );
}

function PropertiesPalette() {
  return (
    <aside className="flex flex-col w-[236px] shrink-0 min-h-0 pt-1 border-l-2 border-[#9a9a9a] bg-[#ececec]">
      <div className="flex items-center h-[7px] gap-[3px] pl-[7px] pr-[5px]">
        <button type="button" aria-label="收起" className="flex items-center justify-center size-[7px] rounded-xs border border-[#555] bg-white">
          <span className="w-[3px] h-px bg-[#222]" />
        </button>
        <div className="flex-1 h-[4px] border-y border-[#999]" />
        <button type="button" aria-label="关闭" className="flex items-center justify-center size-[7px] rounded-xs border border-[#555] bg-white">
          <svg viewBox="0 0 5 5" className="size-[5px]"><path d="M0 0l5 5M5 0L0 5" stroke="#222" /></svg>
        </button>
      </div>
      <div className="flex items-center h-[17px] mt-[6px] pl-[6px] pr-[6px] gap-[6px]">
        <div className="relative flex flex-1 h-4 items-center bg-white border border-[#ddd]">
          <select aria-label="选择" className="appearance-none w-full h-full pl-px bg-transparent text-[9px] text-[#222] outline-none">
            <option>无选择</option>
          </select>
          <svg viewBox="0 0 6 4" className="absolute right-[3px] w-[5px] h-[3px] pointer-events-none"><path d="M0 0h6L3 4z" fill="#111" /></svg>
        </div>
        <div className="flex">
          <button type="button" aria-label="PICKADD" className="flex w-[17px] h-4 items-center justify-center border border-[#ccc]">
            <svg viewBox="0 0 16 16" className="size-[13px]" fill="none">
              <rect x="4.500" y="1.500" width="10" height="10" fill="#c8daf0" stroke="#6585ad" />
              <rect x="1.500" y="4.500" width="10" height="10" fill="#e4eefa" stroke="#4a6c99" />
              <path d="M8 5.500v6M5 8.500h6" stroke="#24559c" strokeWidth="2" />
            </svg>
          </button>
          <button type="button" aria-label="选择对象" className="flex w-[17px] h-4 items-center justify-center border border-[#ccc]">
            <svg viewBox="0 0 16 16" className="size-[13px]" fill="none">
              <path d="M2 2v12h9M2 2h10v7" stroke="#5c7290" strokeWidth="1.200" />
              <rect x="6" y="2" width="4" height="5" fill="#c92f3c" />
              <path d="M10 8l5 5-2 0 1 3-2-2-2 1z" fill="#4577aa" />
            </svg>
          </button>
          <button type="button" aria-label="快速选择" className="flex w-[17px] h-4 items-center justify-center border border-[#ccc]">
            <svg viewBox="0 0 16 16" className="size-[13px]" fill="none">
              <path d="M1 2h11L8.500 8v7L5.500 13V8z" fill="#5b92cb" stroke="#2a5688" />
              <path d="M14 4l-4 6h3l-3 5 6-6h-3l3-5z" fill="#e7cf3a" stroke="#9b8522" strokeWidth=".5" />
            </svg>
          </button>
        </div>
      </div>
      <div className="flex flex-1 min-h-0 mt-[9px] pl-[7px]">
        <div className="flex-1 min-w-0 overflow-hidden">
          {SECTIONS.map((s) => <Section key={s.title} title={s.title} rows={s.rows} />)}
        </div>
        <div className="flex w-[7px] ml-[6px] mr-px flex-col bg-white">
          <div className="flex h-3 items-center justify-center bg-[#ececec]">
            <svg viewBox="0 0 5 3" className="w-[5px] h-[3px]"><path d="M0 3h5L2.500 0z" fill="#333" /></svg>
          </div>
          <div className="h-8/11 bg-[#bfbfbf]" />
        </div>
      </div>
    </aside>
  );
}

export default function App() {
  return (
    <div className="relative flex flex-col h-screen overflow-hidden bg-[#efefef] font-[Noto_Sans,Noto_Sans_CJK_SC,sans-serif]">
      <TitleBar />
      <div className="flex flex-1 min-h-0">
        <div className="w-[7px] shrink-0 border-l-2 border-r border-l-[#7f93b0] border-r-[#6a7c92] bg-[#b9d2ec]" />
        <div className="flex flex-1 min-w-0 flex-col">
          <MenuBar />
          <Toolbars />
          <div className="flex flex-1 min-h-0">
            <div className="flex flex-1 min-w-0 flex-col">
              <Workspace />
              <CommandLine />
            </div>
            <PropertiesPalette />
          </div>
        </div>
        <div className="w-[7px] shrink-0 border-l border-r border-l-[#6a7c92] border-r-[#8ea4c0] bg-[#bcd3f0]" />
      </div>
      <div className="absolute right-0 top-[338px] flex w-[6px] h-[41px] items-end justify-center rounded-l-sm bg-[#2f3a4a] pb-1">
        <span className="w-[3px] h-4 bg-[#4f8f5c]" />
      </div>
      <svg viewBox="0 0 245 68" className="absolute right-0 bottom-0 w-[245px] h-[68px] pointer-events-none">
        <path d="M87 15q0-13 7-13t6 13zM103 16q0-12 7-12t7 12z" fill="#fff" stroke="#c4c4c4" />
        <path d="M25 14H245V68H2Q-3 44 12 39Q10 16 25 14Z" fill="#fff" />
      </svg>
    </div>
  );
}
